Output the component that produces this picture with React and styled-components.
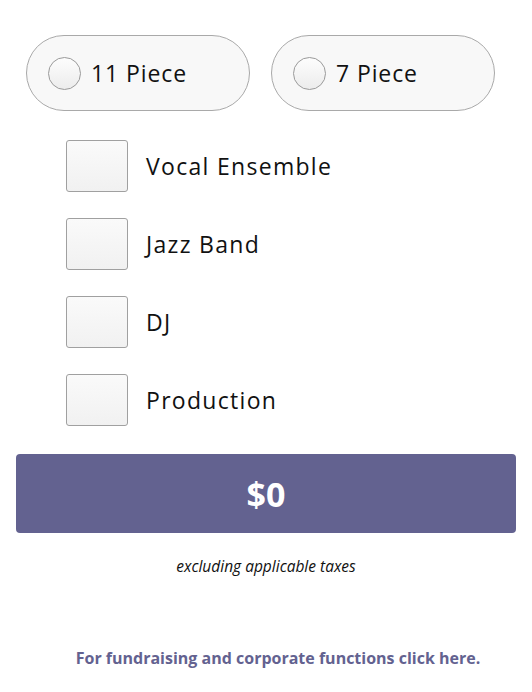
import React, { useState } from "react";
import styled, { createGlobalStyle } from "styled-components";

const GlobalStyle = createGlobalStyle`
  body {
    margin: 0;
    background: #fff;
    font-family: "Open Sans", "Liberation Sans", sans-serif;
  }
`;

const sizes = ["11 Piece", "7 Piece"];
const extras = ["Vocal Ensemble", "Jazz Band", "DJ", "Production"];

const App = () => {
  const [size, setSize] = useState(null);
  const [checked, setChecked] = useState({});

  return (
    <Page>
      <GlobalStyle />
      <PillRow>
        {sizes.map((s) => (
          <Pill key={s} onClick={() => setSize(s)}>
            <Radio $on={size === s} />
            <PillText>{s}</PillText>
          </Pill>
        ))}
      </PillRow>
      <CheckList>
        {extras.map((e) => (
          <CheckRow key={e} onClick={() => setChecked({ ...checked, [e]: !checked[e] })}>
            <Box $on={checked[e]} />
            <CheckText>{e}</CheckText>
          </CheckRow>
        ))}
      </CheckList>
      <Price>$0</Price>
      <Note>excluding applicable taxes</Note>
      <Footer href="#">For fundraising and corporate functions click here.</Footer>
    </Page>
  );
};

const Page = styled.div`
  width: 532px;
  padding: 35px 16px 0;
  box-sizing: border-box;
  display: flex;
  flex-direction: column;
`;

const PillRow = styled.div`
  display: flex;
  gap: 21px;
  padding-left: 10px;
`;

const Pill = styled.div`
  width: 224px;
  height: 76px;
  box-sizing: border-box;
  border: 1px solid #a9a9a9;
  border-radius: 38px;
  background: #f8f8f8;
  display: flex;
  align-items: center;
  padding-left: 21px;
  cursor: pointer;
`;

const Radio = styled.span`
  width: 33px;
  height: 33px;
  box-sizing: border-box;
  border-radius: 50%;
  border: 1px solid #9a9a9a;
  background: ${(p) => (p.$on ? "#636290" : "linear-gradient(#fdfdfd, #ececec)")};
  margin-right: 10px;
`;

const PillText = styled.span`
  font-family: "Open Sans", "Noto Sans", sans-serif;
  font-size: 23px;
  color: #111;
  letter-spacing: 0.9px;
`;

const CheckList = styled.div`
  display: flex;
  flex-direction: column;
  gap: 26px;
  padding: 29px 0 0 50px;
`;

const CheckRow = styled.div`
  display: flex;
  align-items: center;
  height: 52px;
  cursor: pointer;
`;

const Box = styled.span`
  width: 62px;
  height: 52px;
  box-sizing: border-box;
  border: 1px solid #a0a0a0;
  border-radius: 3px;
  background: ${(p) => (p.$on ? "#636290" : "linear-gradient(#fafafa, #f1f1f1)")};
  margin-right: 18px;
`;

const CheckText = styled.span`
  font-family: "Open Sans", "Noto Sans", sans-serif;
  font-size: 23px;
  color: #111;
  letter-spacing: 1.3px;
`;

const Price = styled.div`
  margin-top: 28px;
  height: 79px;
  border-radius: 4px;
  background: #636290;
  color: #fff;
  font-family: "Open Sans", sans-serif;
  font-weight: 700;
  font-size: 34px;
  display: flex;
  align-items: center;
  justify-content: center;
`;

const Note = styled.div`
  margin-top: 22px;
  text-align: center;
  font-family: "Open Sans", sans-serif;
  font-style: italic;
  font-size: 15.5px;
  color: #111;
`;

const Footer = styled.a`
  margin: 70px 0 0 24px;
  text-align: center;
  font-family: "Open Sans", sans-serif;
  font-weight: 700;
  font-size: 16px;
  color: #636290;
  text-decoration: none;
`;

export default App;
